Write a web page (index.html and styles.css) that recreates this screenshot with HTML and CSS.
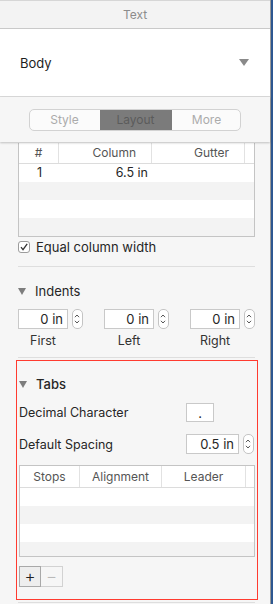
FILE: index.html
```html
<!DOCTYPE html>
<html lang="en">
<head>
  <meta charset="UTF-8" />
  <title>Text Inspector</title>
  <link rel="stylesheet" href="styles.css">
</head>
<body>
  <div class="panel">

    <!-- Inspector header -->
    <div class="title">Text</div>

    <div class="style-pick">
      <span>Body</span>
      <span class="caret"></span>
    </div>

    <div class="seg-area">
      <div class="seg">
        <div class="seg-item">Style</div>
        <div class="seg-item active">Layout</div>
        <div class="seg-item">More</div>
      </div>
    </div>

    <div class="content">
      <!-- Columns table -->
      <div class="grid cols">
        <div class="grid-head">
          <div class="center">#</div>
          <div class="right">Column</div>
          <div class="right">Gutter</div>
          <div></div>
        </div>
        <div class="grid-row">
          <div>1</div>
          <div class="right">6.5 in</div>
          <div></div>
          <div></div>
        </div>
        <div class="grid-row alt"></div>
        <div class="grid-row"></div>
        <div class="grid-row alt"></div>
      </div>

      <label class="check">
        <span class="box">
          <svg width="10" height="10" viewBox="0 0 10 10"><path d="M2 5.2 L4 7.6 L8.2 1.8" fill="none" stroke="#333" stroke-width="1.3"/></svg>
        </span>
        Equal column width
      </label>

      <div class="divider"></div>

      <div class="section-head"><span class="tri"></span>Indents</div>

      <div class="indents">
        <div class="indent">
          <div class="field-row">
            <div class="field">0 in</div>
            <div class="stepper">
              <svg width="11" height="20" viewBox="0 0 11 20"><path d="M3.2 8 L5.5 5.6 L7.8 8 M3.2 12 L5.5 14.4 L7.8 12" fill="none" stroke="#444" stroke-width="1"/></svg>
            </div>
          </div>
          <div class="cap">First</div>
        </div>
        <div class="indent">
          <div class="field-row">
            <div class="field">0 in</div>
            <div class="stepper">
              <svg width="11" height="20" viewBox="0 0 11 20"><path d="M3.2 8 L5.5 5.6 L7.8 8 M3.2 12 L5.5 14.4 L7.8 12" fill="none" stroke="#444" stroke-width="1"/></svg>
            </div>
          </div>
          <div class="cap">Left</div>
        </div>
        <div class="indent">
          <div class="field-row">
            <div class="field">0 in</div>
            <div class="stepper">
              <svg width="11" height="20" viewBox="0 0 11 20"><path d="M3.2 8 L5.5 5.6 L7.8 8 M3.2 12 L5.5 14.4 L7.8 12" fill="none" stroke="#444" stroke-width="1"/></svg>
            </div>
          </div>
          <div class="cap">Right</div>
        </div>
      </div>

      <div class="divider tight"></div>

      <!-- Tabs (highlighted) -->
      <div class="tabs-box">
        <div class="section-head bold"><span class="tri"></span>Tabs</div>

        <div class="opt-row">
          <span>Decimal Character</span>
          <div class="field small center">.</div>
        </div>

        <div class="opt-row">
          <span>Default Spacing</span>
          <div class="field-row">
            <div class="field wide">0.5 in</div>
            <div class="stepper">
              <svg width="11" height="20" viewBox="0 0 11 20"><path d="M3.2 8 L5.5 5.6 L7.8 8 M3.2 12 L5.5 14.4 L7.8 12" fill="none" stroke="#444" stroke-width="1"/></svg>
            </div>
          </div>
        </div>

        <div class="grid stops">
          <div class="grid-head">
            <div class="center">Stops</div>
            <div class="center">Alignment</div>
            <div class="center">Leader</div>
            <div></div>
          </div>
          <div class="grid-row"></div>
          <div class="grid-row alt"></div>
          <div class="grid-row"></div>
          <div class="grid-row alt short"></div>
        </div>

        <div class="pm">
          <div class="pm-btn on">+</div>
          <div class="pm-btn off">&minus;</div>
        </div>
      </div>

      <div class="divider last"></div>
    </div>
  </div>
  <div class="edge"></div>
</body>
</html>
```

FILE: styles.css
```css
* {
  box-sizing: border-box;
  margin: 0;
  padding: 0;
}

body {
  font-family: Inter, "Liberation Sans", sans-serif;
  font-size: 12.5px;
  color: #262626;
  background: #f6f6f6;
  display: flex;
  width: 273px;
  height: 604px;
  overflow: hidden;
}

.panel {
  width: 271px;
  flex: 0 0 271px;
  border-right: 1px solid #9a9a9a;
  background: #f6f6f6;
}

.edge {
  flex: 1;
  background: #2d5790;
}

/* Header */
.title {
  height: 29px;
  border-top: 1px solid #d6d6d6;
  border-bottom: 1px solid #c9c9c9;
  background: #f3f3f3;
  color: #8c8c8c;
  text-align: center;
  line-height: 27px;
  font-size: 12px;
}

.style-pick {
  height: 68px;
  background: #fff;
  border-bottom: 1px solid #dadada;
  display: flex;
  justify-content: space-between;
  align-items: center;
  padding: 0 21px 0 20px;
  font-size: 13px;
  color: #1e1e1e;
}

.caret {
  width: 0;
  height: 0;
  border-left: 5px solid transparent;
  border-right: 5px solid transparent;
  border-top: 7px solid #8a8a8a;
}

.seg-area {
  height: 45px;
  display: flex;
  justify-content: center;
  align-items: center;
  padding-right: 1px;
  position: relative;
  z-index: 1;
  box-shadow: 0 1px 2px rgba(0, 0, 0, 0.22);
}

.seg {
  display: flex;
  width: 212px;
  height: 22px;
  border: 1px solid #d2d2d2;
  border-radius: 5px;
  background: #fbfbfb;
  overflow: hidden;
}

.seg-item {
  flex: 0 0 70px;
  text-align: center;
  line-height: 20px;
  color: #ababab;
  font-size: 12px;
}

.seg-item.active {
  flex: 0 0 72px;
  background: #7b7b7b;
  color: #5b5b5b;
}

.content {
  padding: 1px 15px 0 18px;
}

/* Tables */
.grid {
  background: #fff;
  border: 1px solid #c4c4c4;
}

.grid.cols {
  border-top: none;
}

.grid-head,
.grid-row {
  display: grid;
  grid-template-columns: 40px 93px 93px 1fr;
}

.grid-head {
  height: 21px;
  border-bottom: 1px solid #dcdcdc;
  color: #555;
  font-size: 12px;
  line-height: 20px;
}

.grid-head > div {
  border-right: 1px solid #e2e2e2;
}

.grid-head > div:last-child {
  border-right: none;
}

.grid-head > div.right {
  text-align: right;
  padding: 0 15px 0 0;
}

.grid-head > div.center {
  text-align: center;
}

.grid-row {
  height: 18px;
  line-height: 18px;
}

.grid-row > div {
  padding-left: 18px;
}

.grid-row > div.right {
  text-align: right;
  padding: 0 4px 0 0;
}

.grid-row.alt {
  background: #f3f3f3;
}

.stops .grid-head,
.stops .grid-row {
  grid-template-columns: 60px 82px 84px 1fr;
}

.stops .grid-head {
  height: 22px;
  line-height: 21px;
}

.stops .grid-row.short {
  height: 14px;
}

/* Checkbox */
.check {
  display: flex;
  align-items: center;
  gap: 6px;
  margin-top: 3px;
  height: 13px;
  font-size: 13px;
}

.box {
  width: 12px;
  height: 12px;
  border: 1px solid #9c9c9c;
  border-radius: 3px;
  background: #fff;
  display: flex;
  align-items: center;
  justify-content: center;
}

.divider {
  height: 1px;
  background: #dedede;
  margin-top: 13px;
}

.divider.tight {
  margin-top: 9px;
}

.section-head {
  display: flex;
  align-items: center;
  gap: 9px;
  height: 16px;
  margin-top: 16px;
  font-size: 13px;
}

.section-head.bold {
  font-weight: 500;
}

.tri {
  width: 0;
  height: 0;
  border-left: 4px solid transparent;
  border-right: 4px solid transparent;
  border-top: 7px solid #7d7d7d;
}

/* Indents */
.indents {
  display: flex;
  gap: 21px;
  margin-top: 10px;
}

.field-row {
  display: flex;
  align-items: center;
  gap: 4px;
}

.field {
  width: 50px;
  height: 20px;
  border: 1px solid #c9c9c9;
  background: #fff;
  text-align: right;
  padding-right: 4px;
  line-height: 18px;
  font-size: 13px;
}

.field.small {
  width: 28px;
  height: 19px;
  margin-right: 40px;
}

.field.center {
  text-align: center;
  padding: 0;
}

.field.wide {
  width: 53px;
}

.stepper {
  width: 11px;
  height: 20px;
  border: 1px solid #c4c4c4;
  border-radius: 5px;
  background: #fff;
  display: flex;
}

.stepper svg {
  margin-left: -1px;
  margin-top: -1px;
}

.cap {
  width: 50px;
  text-align: center;
  margin-top: 4px;
  font-size: 12.5px;
  color: #333;
}

/* Tabs */
.tabs-box {
  margin: 2px -3px 0 -2px;
  padding: 0 2px 0 2px;
  border: 1px solid #ff3b30;
  height: 240px;
}

.tabs-box .section-head {
  margin-top: 15px;
}

.opt-row {
  display: flex;
  justify-content: space-between;
  align-items: center;
  height: 20px;
  margin-top: 10px;
  padding-right: 1px;
}

.opt-row + .opt-row {
  margin-top: 12px;
}

.grid.stops {
  margin-top: 11px;
}

.pm {
  display: flex;
  margin-top: 9px;
}

.pm-btn {
  width: 22px;
  height: 21px;
  text-align: center;
  line-height: 19px;
  font-size: 17px;
  font-weight: 300;
}

.pm-btn.on {
  border: 1px solid #a9a9a9;
  background: #eeeeee;
  color: #222;
}

.pm-btn.off {
  border: 1px solid #d2d2d2;
  border-left: none;
  background: #f6f6f6;
  color: #b9b9b9;
}

.divider.last {
  margin-top: 2px;
}
```
